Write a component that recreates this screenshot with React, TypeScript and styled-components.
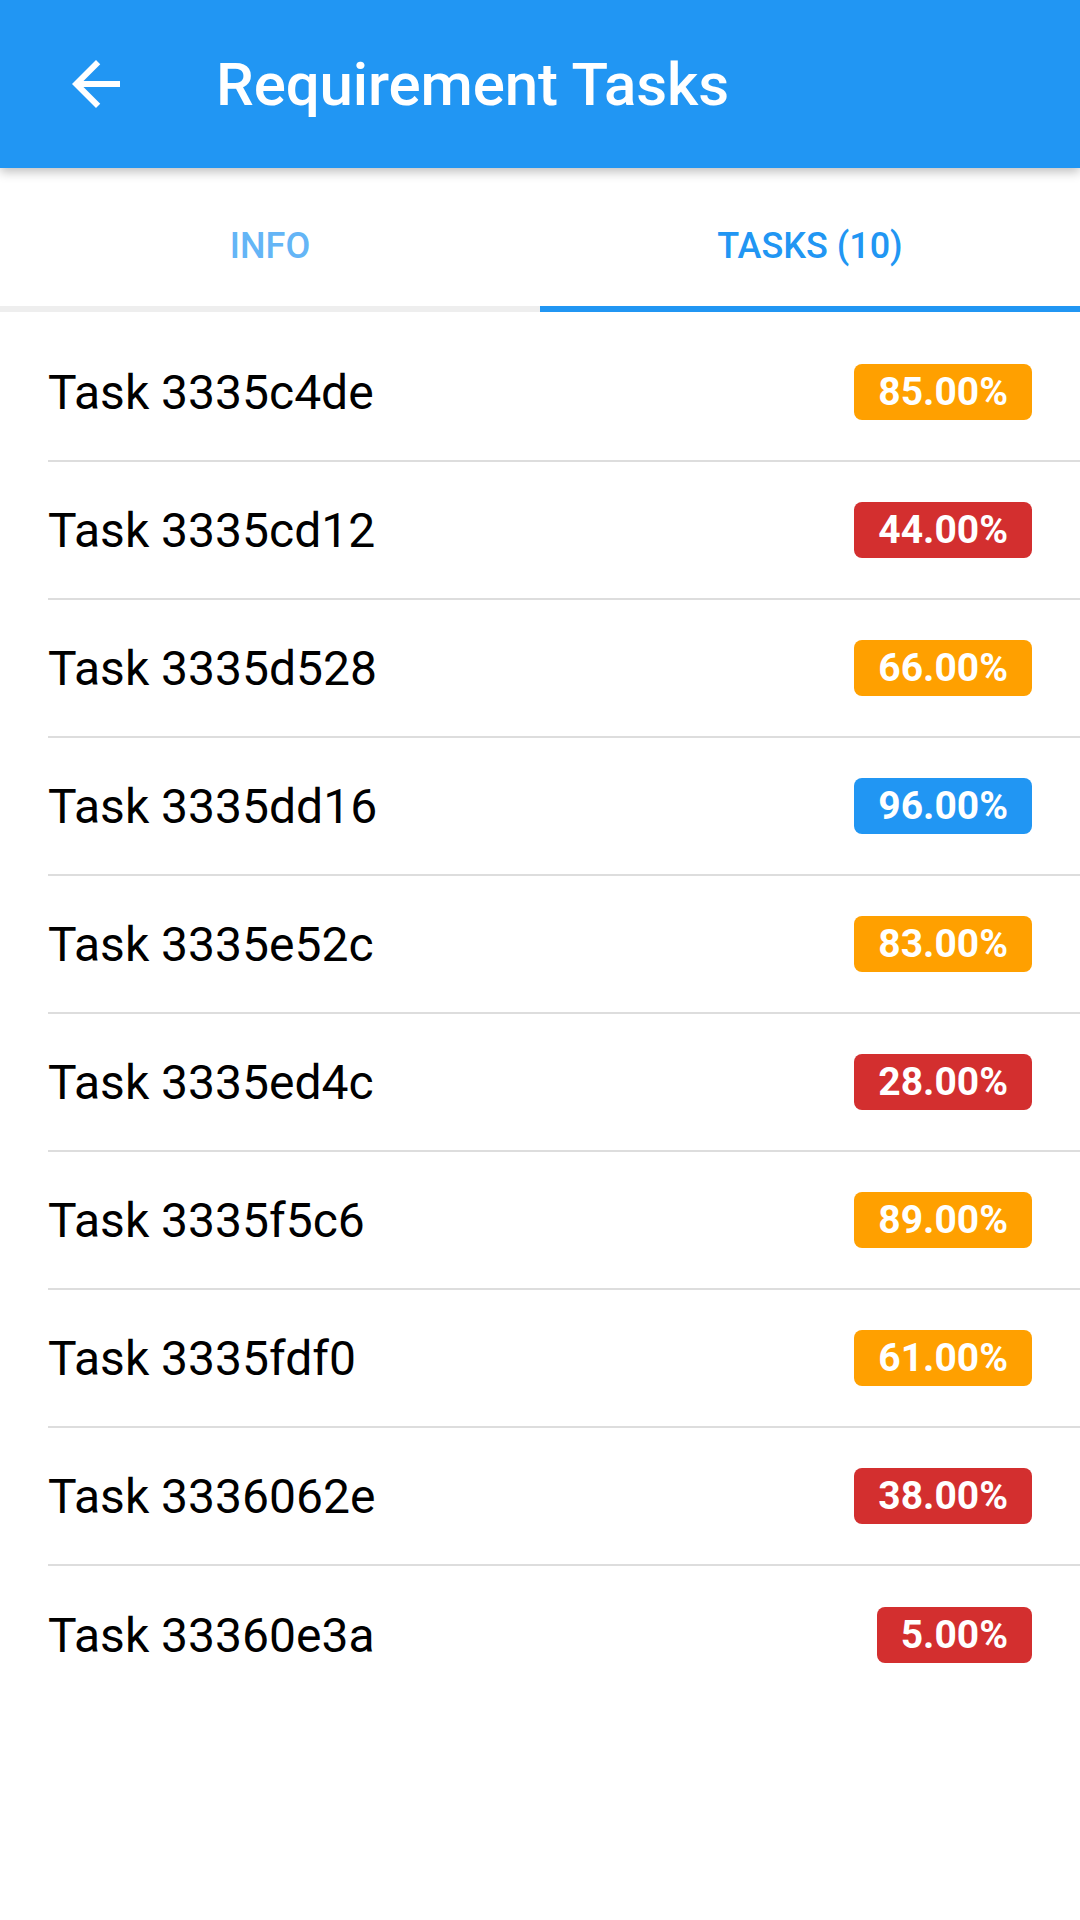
import { createGlobalStyle } from "styled-components";
import styled from "styled-components";

const GlobalStyle = createGlobalStyle`
  html, body {
    margin: 0;
    padding: 0;
    background: #ffffff;
  }
  body {
    font-family: Roboto, "Noto Sans", "Liberation Sans", sans-serif;
  }
  * {
    box-sizing: border-box;
  }
`;

type Task = {
  id: string;
  progress: number;
};

const tasks: Task[] = [
  { id: "3335c4de", progress: 85 },
  { id: "3335cd12", progress: 44 },
  { id: "3335d528", progress: 66 },
  { id: "3335dd16", progress: 96 },
  { id: "3335e52c", progress: 83 },
  { id: "3335ed4c", progress: 28 },
  { id: "3335f5c6", progress: 89 },
  { id: "3335fdf0", progress: 61 },
  { id: "3336062e", progress: 38 },
  { id: "33360e3a", progress: 5 },
];

const badgeColor = (p: number) => {
  if (p >= 90) return "#2196f3";
  if (p >= 50) return "#ffa000";
  return "#d32f2f";
};

const App = () => {
  return (
    <Page>
      <GlobalStyle />
      <AppBar>
        <BackButton aria-label="back">
          <svg width="72" height="72" viewBox="0 0 24 24">
            <path
              d="M20 11H7.83l5.59-5.59L12 4l-8 8 8 8 1.41-1.41L7.83 13H20v-2z"
              fill="#ffffff"
            />
          </svg>
        </BackButton>
        <Title>Requirement Tasks</Title>
      </AppBar>

      <TabBar>
        <Tab>
          <TabLabel>INFO</TabLabel>
          <Indicator />
        </Tab>
        <Tab $active>
          <TabLabel $active>TASKS (10)</TabLabel>
          <Indicator $active />
        </Tab>
      </TabBar>

      <TaskList>
        {tasks.map((task, i) => (
          <TaskRow key={task.id} $last={i === tasks.length - 1}>
            <TaskName>Task {task.id}</TaskName>
            <Badge $color={badgeColor(task.progress)}>
              {task.progress.toFixed(2)}%
            </Badge>
          </TaskRow>
        ))}
      </TaskList>
    </Page>
  );
};

const Page = styled.div`
  width: 1080px;
  min-height: 1920px;
  background: #ffffff;
  display: flex;
  flex-direction: column;
`;

const AppBar = styled.header`
  height: 168px;
  background-color: #2196f3;
  display: flex;
  align-items: center;
  padding-left: 60px;
  box-shadow: 0 4px 10px rgba(0, 0, 0, 0.25);
  position: relative;
  z-index: 2;
`;

const BackButton = styled.div`
  width: 72px;
  height: 72px;
  display: flex;
  align-items: center;
  justify-content: center;
  margin-right: 84px;
`;

const Title = styled.h1`
  margin: 0;
  color: #ffffff;
  font-size: 60px;
  font-weight: 500;
  letter-spacing: -0.1px;
`;

const TabBar = styled.nav`
  height: 144px;
  display: flex;
  background: #ffffff;
`;

const Tab = styled.div<{ $active?: boolean }>`
  flex: 1;
  display: flex;
  flex-direction: column;
`;

const TabLabel = styled.div<{ $active?: boolean }>`
  flex: 1;
  display: flex;
  align-items: center;
  justify-content: center;
  padding-top: 18px;
  font-size: 36px;
  font-weight: 500;
  color: ${(p) => (p.$active ? "#2196f3" : "#64b5f6")};
`;

const Indicator = styled.div<{ $active?: boolean }>`
  height: 6px;
  background: ${(p) => (p.$active ? "#2196f3" : "#eeeeee")};
`;

const TaskList = styled.ul`
  list-style: none;
  margin: 0;
  padding: 12px 0 0 48px;
`;

const TaskRow = styled.li<{ $last?: boolean }>`
  height: 138px;
  display: flex;
  align-items: center;
  justify-content: space-between;
  padding-right: 48px;
  border-bottom: ${(p) => (p.$last ? "none" : "2px solid #dddddd")};
`;

const TaskName = styled.span`
  font-size: 48px;
  color: #000000;
`;

const Badge = styled.span<{ $color: string }>`
  height: 56px;
  padding: 0 24px;
  border-radius: 8px;
  background: ${(p) => p.$color};
  color: #ffffff;
  font-size: 39px;
  font-weight: 700;
  display: flex;
  align-items: center;
`;

export default App;
